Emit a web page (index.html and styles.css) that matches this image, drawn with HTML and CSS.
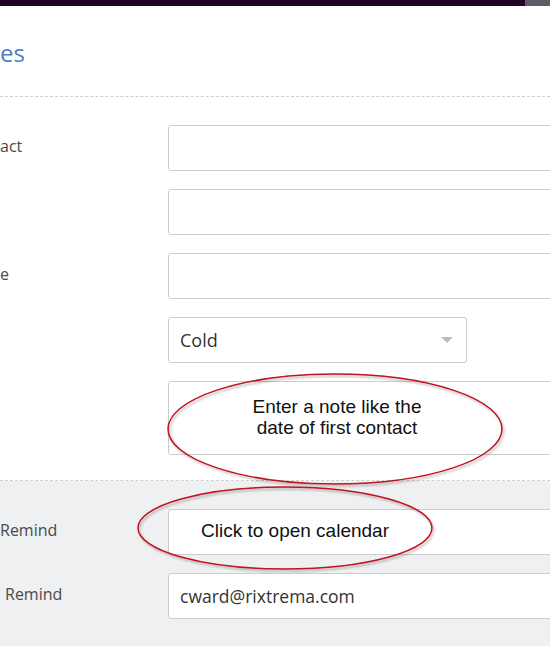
FILE: index.html
```html
<!DOCTYPE html>
<html>
<head>
<meta charset="utf-8">
<link rel="stylesheet" href="styles.css">
</head>
<body>
<div class="page">
  <div class="topbar"><span class="topbar-btn"></span></div>
  <div class="header"><h1 class="title">es</h1></div>
  <div class="form">
    <div class="row"><label class="label">act</label><input class="field" type="text"></div>
    <div class="row"><label class="label"></label><input class="field" type="text"></div>
    <div class="row"><label class="label">e</label><input class="field" type="text"></div>
    <div class="row"><label class="label"></label>
      <div class="select"><span>Cold</span><span class="caret"></span></div>
    </div>
    <div class="row row-tall"><label class="label"></label><div class="field area"></div></div>
  </div>
  <div class="remind">
    <div class="row"><label class="label">Remind</label><div class="field"></div></div>
    <div class="row"><label class="label label-indent">Remind</label><div class="field value">cward@rixtrema.com</div></div>
  </div>
  <svg class="notes" width="550" height="653" viewBox="0 0 550 653">
    <defs>
      <filter id="sh" x="-10%" y="-10%" width="120%" height="130%">
        <feDropShadow dx="1.5" dy="2" stdDeviation="1.2" flood-color="#000" flood-opacity="0.3"/>
      </filter>
    </defs>
    <ellipse cx="335" cy="429" rx="167" ry="55" class="ring" filter="url(#sh)"/>
    <text x="337" y="413" class="note">Enter a note like the</text>
    <text x="337" y="434" class="note">date of first contact</text>
    <ellipse cx="285" cy="528" rx="147" ry="41" class="ring" filter="url(#sh)"/>
    <text x="295" y="537" class="note">Click to open calendar</text>
  </svg>
</div>
</body>
</html>
```
FILE: styles.css
```css
html, body {
  margin: 0;
  padding: 0;
  background: #fff;
  overflow: hidden;
}
.page {
  position: relative;
  width: 550px;
  height: 653px;
  overflow: hidden;
  font-family: "Open Sans", "Noto Sans", sans-serif;
}
.topbar {
  height: 6px;
  background: #1e0522;
  display: flex;
  justify-content: flex-end;
}
.topbar-btn {
  width: 25px;
  height: 6px;
  background: #615b66;
}
.header {
  box-sizing: border-box;
  height: 91px;
  padding-top: 31px;
  border-bottom: 1px dashed #cfcfcf;
}
.title {
  margin: 0;
  font-weight: 400;
  font-size: 24px;
  line-height: 32px;
  color: #4d7cbf;
}
.form {
  padding: 28px 0 25px;
  display: flex;
  flex-direction: column;
  gap: 18px;
  border-bottom: 1px dashed #cfcfcf;
}
.remind {
  background: #eef0f2;
  padding: 28px 0 27px;
  display: flex;
  flex-direction: column;
  gap: 18px;
}
.row {
  display: flex;
  align-items: center;
  height: 46px;
}
.row-tall {
  height: 74px;
}
.label {
  width: 168px;
  flex: none;
  font-size: 16px;
  color: #4a4a4a;
  padding-bottom: 4px;
}
.label-indent {
  padding-left: 5px;
  box-sizing: border-box;
}
.field {
  box-sizing: border-box;
  flex: none;
  width: 420px;
  height: 46px;
  margin: 0;
  border: 1px solid #cccccc;
  border-radius: 3px;
  background: #fff;
  font-family: inherit;
}
.area {
  height: 74px;
}
.value {
  display: flex;
  align-items: center;
  padding-left: 11px;
  font-size: 17.5px;
  color: #333;
}
.select {
  box-sizing: border-box;
  width: 299px;
  height: 46px;
  border: 1px solid #cccccc;
  border-radius: 3px;
  display: flex;
  align-items: center;
  justify-content: space-between;
  padding: 0 13px 0 11px;
  font-size: 18px;
  color: #333;
}
.caret {
  width: 0;
  height: 0;
  border-left: 6px solid transparent;
  border-right: 6px solid transparent;
  border-top: 6px solid #bdbdbd;
}
.notes {
  position: absolute;
  left: 0;
  top: 0;
  pointer-events: none;
}
.ring {
  fill: none;
  stroke: #c0121c;
  stroke-width: 1.5;
}
.note {
  font-family: "Liberation Sans", Arial, sans-serif;
  font-size: 19px;
  fill: #111;
  text-anchor: middle;
}
```
